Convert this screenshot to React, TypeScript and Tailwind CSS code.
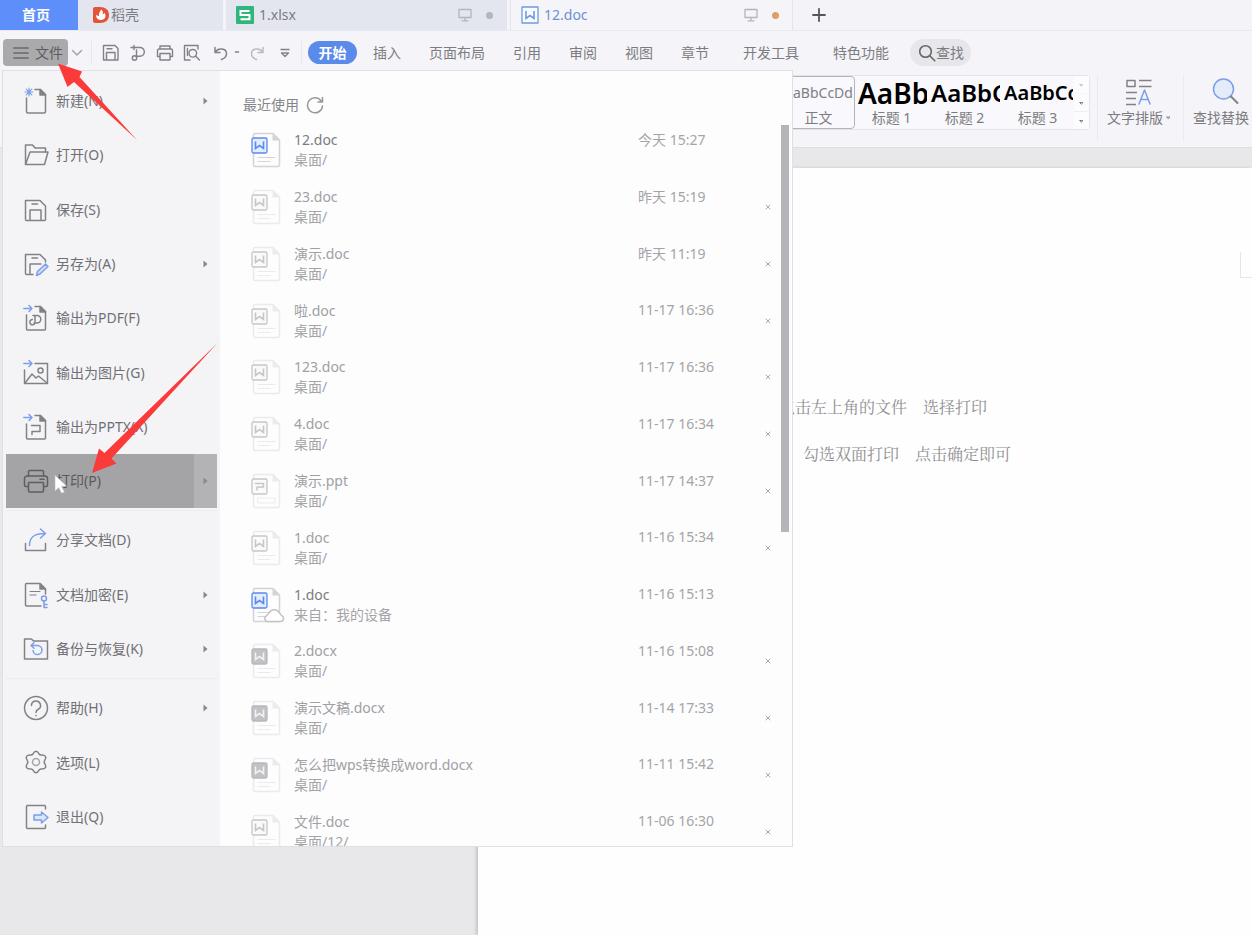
import React from "react";

const INK = "#828286";
const BLUE = "#7c9fe6";

function Svg({ w, h, children, stroke = INK, sw = 1.5 }: { w: number; h: number; children: React.ReactNode; stroke?: string; sw?: number }) {
  return (
    <svg width={w} height={h} viewBox={`0 0 ${w} ${h}`} fill="none" stroke={stroke} strokeWidth={sw} strokeLinejoin="round" strokeLinecap="round" aria-hidden="true" className="shrink-0">
      {children}
    </svg>
  );
}

type MenuItem = { label: string; icon: React.ReactNode; more?: boolean; active?: boolean };

const exportArrow = <path stroke={BLUE} d="M0.8 4.5H9M6 1.5l3 3-3 3" />;

const groups: MenuItem[][] = [
  [
    {
      label: "新建(N)",
      more: true,
      icon: (
        <>
          <path d="M3.5 11V24.5a1.5 1.5 0 0 0 1.5 1.5H21a1.500 1.500 0 0 0 1.500-1.500V7.500L17.500 2.500H12" />
          <path fill={INK} d="M17 2.500v5.500h5.500z" />
          <path stroke={BLUE} strokeWidth="1.200" d="M6 1v8M2 5h8M3.200 2.200l5.600 5.600M8.800 2.200L3.200 7.800" />
        </>
      ),
    },
    {
      label: "打开(O)",
      icon: (
        <>
          <path d="M2.500 23V4h7l2.500 3h10.500v4" />
          <path d="M2.500 23.500L7 11h18l-3.500 12.500z" />
        </>
      ),
    },
    {
      label: "保存(S)",
      icon: (
        <>
          <path d="M2.500 4.500h14.500l5.500 5.500v13.500a1 1 0 0 1-1 1h-18a1 1 0 0 1-1-1z" />
          <path d="M7 24v-10h11v10M9 8h5.500" />
        </>
      ),
    },
    {
      label: "另存为(A)",
      more: true,
      icon: (
        <>
          <path d="M10 24.500H3.500a1 1 0 0 1-1-1v-19H17l5.500 5.500v2" />
          <path d="M7 24v-10h11M9 8h5.500" />
          <path stroke={BLUE} fill="#cfdcf7" d="M13.500 25.500l1-4 8-7.500 2.500 2.500-8 7.500z" />
        </>
      ),
    },
    {
      label: "输出为PDF(F)",
      icon: (
        <>
          {exportArrow}
          <path d="M3.500 11V25a1 1 0 0 0 1 1H21.500a1 1 0 0 0 1-1V7.500L17.500 2.500H12" />
          <path fill={INK} d="M17 2.500v5.500h5.500z" />
          <path d="M10 11.500H14a3.800 3.800 0 0 1 0 7.600h-3M12 11.500v6.500a2.600 2.600 0 1 1-2.600-2.400" />
        </>
      ),
    },
    {
      label: "输出为图片(G)",
      icon: (
        <>
          {exportArrow}
          <path d="M12 4.500h12.500V24.500H1.500V11" />
          <circle cx="17.500" cy="11.500" r="2.500" />
          <path d="M2 24L9 15l4 4 2.500-2L24 24" />
        </>
      ),
    },
    {
      label: "输出为PPTX(X)",
      icon: (
        <>
          {exportArrow}
          <path d="M3.500 11V25a1 1 0 0 0 1 1H21.500a1 1 0 0 0 1-1V7.500L17.500 2.500H12" />
          <path fill={INK} d="M17 2.500v5.500h5.500z" />
          <path d="M8.500 12.500h8.500v6H9v3" />
        </>
      ),
    },
    {
      label: "打印(P)",
      more: true,
      active: true,
      icon: (
        <g stroke="#5e5e61">
          <path d="M5.500 9V4.500a1 1 0 0 1 1-1h13a1 1 0 0 1 1 1V9" />
          <path d="M5 19.500H3a1.500 1.500 0 0 1-1.500-1.500v-6.500A2.500 2.500 0 0 1 4 9h18a2.500 2.500 0 0 1 2.500 2.500V18a1.500 1.500 0 0 1-1.500 1.500h-2" />
          <path d="M5.500 15.500h15v8.500a1 1 0 0 1-1 1h-13a1 1 0 0 1-1-1zM17 12.200h4" />
        </g>
      ),
    },
  ],
  [
    {
      label: "分享文档(D)",
      icon: (
        <>
          <path d="M2.500 17.500v7h20v-7" />
          <path stroke={BLUE} d="M6.500 19.500C6.500 11 11 7.500 21.500 7.500M17.500 3l5 4.500-5 4.500" />
        </>
      ),
    },
    {
      label: "文档加密(E)",
      more: true,
      icon: (
        <>
          <path d="M18 25H3.500a1 1 0 0 1-1-1V3.500a1 1 0 0 1 1-1H17L22.500 8v5" />
          <path fill={INK} d="M17 2.500V8h5.500z" />
          <path d="M7 10.500h10M7 14h6" strokeWidth="1.200" />
          <g stroke={BLUE}>
            <circle cx="21" cy="17.500" r="2.500" />
            <path d="M21 20v6.500M21 23.500h3M21 26.500h3" />
          </g>
        </>
      ),
    },
    {
      label: "备份与恢复(K)",
      more: true,
      icon: (
        <>
          <path d="M1.500 24V4h7l2 2h14V24z" />
          <path stroke={BLUE} d="M8.500 10.500h6a4.500 4.500 0 1 1-4.500 5M11 7.800l-3 2.700 3 2.700" />
        </>
      ),
    },
  ],
  [
    {
      label: "帮助(H)",
      more: true,
      icon: (
        <>
          <circle cx="13" cy="14" r="11.500" />
          <path d="M8.500 11.500a4.500 4.500 0 1 1 6.500 4c-1.500.8-2 1.500-2 3M13 21.500v.200" />
        </>
      ),
    },
    {
      label: "选项(L)",
      icon: (
        <>
          <path d="M13 2.200c1.400 0 2.200 1.200 3 2.700.5.900 1.100 1.200 2.100 1.100 1.800-.1 3.500 0 4.300 1.300.8 1.200.2 2.700-.8 4.300-.6.900-.6 1.900 0 2.800 1 1.600 1.600 3.100.8 4.300-.8 1.300-2.500 1.400-4.300 1.300-1-.1-1.600.2-2.100 1.100-.8 1.500-1.600 2.700-3 2.700s-2.200-1.200-3-2.700c-.5-.9-1.100-1.200-2.100-1.100-1.800.1-3.500 0-4.300-1.300-.8-1.200-.2-2.700.8-4.300.6-.9.6-1.900 0-2.800-1-1.600-1.600-3.100-.8-4.300.8-1.300 2.500-1.400 4.300-1.300 1 .1 1.600-.2 2.100-1.100.8-1.500 1.600-2.700 3-2.700z" />
          <circle cx="13" cy="13" r="3.500" stroke="#a5a5a9" />
        </>
      ),
    },
    {
      label: "退出(Q)",
      icon: (
        <>
          <path d="M22.500 6V3.500a1 1 0 0 0-1-1H4.500a1 1 0 0 0-1 1V24.500a1 1 0 0 0 1 1H21.500a1 1 0 0 0 1-1V22" />
          <path stroke={BLUE} fill="#dbe6fb" d="M11 12h7.500V9l6.500 5.500-6.500 5.500v-3H11z" />
        </>
      ),
    },
  ],
];

type Kind = "doc" | "docx" | "ppt";
type RecentFile = { name: string; path: string; time: string; kind: Kind; live?: boolean; cloud?: boolean };

const files: RecentFile[] = [
  { name: "12.doc", path: "桌面/", time: "今天 15:27", kind: "doc", live: true },
  { name: "23.doc", path: "桌面/", time: "昨天 15:19", kind: "doc" },
  { name: "演示.doc", path: "桌面/", time: "昨天 11:19", kind: "doc" },
  { name: "啦.doc", path: "桌面/", time: "11-17 16:36", kind: "doc" },
  { name: "123.doc", path: "桌面/", time: "11-17 16:36", kind: "doc" },
  { name: "4.doc", path: "桌面/", time: "11-17 16:34", kind: "doc" },
  { name: "演示.ppt", path: "桌面/", time: "11-17 14:37", kind: "ppt" },
  { name: "1.doc", path: "桌面/", time: "11-16 15:34", kind: "doc" },
  { name: "1.doc", path: "来自：我的设备", time: "11-16 15:13", kind: "doc", live: true, cloud: true },
  { name: "2.docx", path: "桌面/", time: "11-16 15:08", kind: "docx" },
  { name: "演示文稿.docx", path: "桌面/", time: "11-14 17:33", kind: "docx" },
  { name: "怎么把wps转换成word.docx", path: "桌面/", time: "11-11 15:42", kind: "docx" },
  { name: "文件.doc", path: "桌面/12/", time: "11-06 16:30", kind: "doc" },
];

function FileIcon({ kind, live, cloud }: { kind: Kind; live?: boolean; cloud?: boolean }) {
  const sheet = live ? "#d4d4d8" : "#ebebee";
  const mark = live ? "#5b8bea" : "#c6c6ca";
  const solid = kind === "docx";
  return (
    <svg width="36" height="38" viewBox="0 0 36 38" fill="none" strokeLinejoin="round" strokeLinecap="round" aria-hidden="true" className="shrink-0">
      <path stroke={sheet} strokeWidth="1.5" d="M5 2.500H23l6.500 6.500V34a1.500 1.500 0 0 1-1.500 1.500H5A1.500 1.500 0 0 1 3.500 34V4A1.500 1.500 0 0 1 5 2.500z" />
      <path fill={sheet} d="M22.500 2.500V9.500H29.500z" />
      {kind === "ppt" ? <rect x="8" y="26" width="17" height="5" stroke={sheet} /> : <path stroke={sheet} d="M8 26.500H25M8 30.500H20" />}
      <rect x="2" y="7" width="15" height="15" rx="1.500" stroke={solid ? "#b8b8bc" : mark} strokeWidth="1.300" fill={solid ? "#c2c2c6" : live ? "#e3edff" : "#fafafa"} />
      {kind === "ppt" ? (
        <path stroke={mark} strokeWidth="1.500" d="M5.500 11.500h8v3.500h-6.500v3" />
      ) : (
        <path stroke={solid ? "#f2f2f4" : mark} strokeWidth="1.600" strokeLinecap="butt" strokeLinejoin="miter" d="M5.500 10.500v7l4-3 4 3v-7" />
      )}
      {cloud && <path fill="#fff" stroke="#c2c2c6" strokeWidth="1.500" d="M17.500 35.500a3 3 0 0 1-1.500-5.400c1.500-1 2.300-2 3.200-3.600a6 6 0 0 1 10 0c.9 1.600 1.700 2.600 3.200 3.600a3 3 0 0 1-1.500 5.400z" />}
    </svg>
  );
}

function WordTabIcon() {
  return (
    <Svg w={18} h={18} stroke="#6f9bdc" sw={1.3}>
      <rect x="1" y="1" width="16" height="16" fill="#f8fbff" />
      <path strokeWidth="1.600" strokeLinejoin="miter" strokeLinecap="butt" d="M5 5v7.500l4-3 4 3V5" />
    </Svg>
  );
}

function Monitor() {
  return (
    <Svg w={14} h={14} stroke="#b4b5bb" sw={1.3}>
      <path d="M1 1.500h12v8H1zM7 9.500v3M4 12.800h6" />
    </Svg>
  );
}

function TabBar() {
  return (
    <header className="flex h-[31px] items-stretch border-b border-[#e8e9ef] bg-[#f3f3f8]">
      <button className="w-[78px] bg-[#5e8efa] pr-1.5 font-bold text-white">首页</button>
      <button className="flex w-[145px] items-center gap-0.5 bg-[#e4e6ef] pl-[15px]">
        <svg width="16" height="18" viewBox="0 0 16 18" aria-hidden="true">
          <path fill="#e2543a" d="M0 3a2 2 0 0 1 2-2h5c5.500 0 9 3 9 8s-3.500 8-9 8H2a2 2 0 0 1-2-2z" />
          <path fill="#fff" d="M8 3.500c2.500 1.500 2 3.500 1.500 5 1-.3 1.500-1 1.800-1.800C14 10 12 14 8 14c-3.500 0-5.500-2.500-4.500-5.500.8 1 1.500 1.500 2.500 1.500C5.500 7.500 7 6 8 3.500z" />
        </svg>
        稻壳
      </button>
      <div className="ml-[3px] flex w-[281px] items-center bg-[#e4e6ef] pl-2.5">
        <svg width="18" height="18" viewBox="0 0 18 18" aria-hidden="true">
          <rect width="18" height="18" rx="1" fill="#2fb67c" />
          <path fill="none" stroke="#fff" strokeWidth="2" d="M13.500 5h-9v4h9v4.200h-9" />
        </svg>
        <a href="#xlsx" className="ml-[5px] flex-1">1.xlsx</a>
        <Monitor />
        <span className="mr-[14px] ml-[14px] size-[7px] rounded-full bg-[#b4b5bb]" />
      </div>
      <div className="ml-[3px] flex w-[283px] items-center border-x border-[#e3e5ec] bg-[#f5f5f9] pl-[10px]">
        <WordTabIcon />
        <a href="#doc" className="ml-[5px] flex-1 text-[#6f90d0]">12.doc</a>
        <Monitor />
        <span className="mr-[13px] ml-[14px] size-[7px] rounded-full bg-[#dc9f64]" />
      </div>
      <button aria-label="新建标签" className="flex w-[52px] items-center justify-center">
        <Svg w={14} h={14} stroke="#55555a" sw={1.8}>
          <path d="M7 1v12M1 7h12" />
        </Svg>
      </button>
    </header>
  );
}

const tools: { label: string; body: React.ReactNode }[] = [
  { label: "保存", body: <path d="M1.500 1.500h11.500l3 3v11.500h-14.500zM4.500 16V8.500h8.500V16M5 4.800h5" /> },
  { label: "输出为PDF", body: <><path d="M2 3.500h9a4.300 4.300 0 0 1 0 8.700H8M5 1.500v4M7.500 6v7" /><circle cx="5.500" cy="14" r="2.200" /></> },
  { label: "打印", body: <path d="M4 5V2h10v3M4 12.500H1.500v-6A1.500 1.500 0 0 1 3 5h12a1.500 1.500 0 0 1 1.500 1.500v6H14M4 9.500h10v6.500H4z" /> },
  { label: "打印预览", body: <><path d="M7 16H1.500V1.500h13.500V5" /><circle cx="9.800" cy="9.300" r="3.800" /><path d="M12.500 12l4 4M4.500 4.500v7" /></> },
];

function QuickAccess() {
  return (
    <div className="flex items-center">
      <button className="flex h-[27px] w-[65px] items-center gap-[6px] rounded bg-[#aaaaad] pl-2.5 text-[#5c5c60]">
        <Svg w={16} h={14} stroke="#6a6a6e">
          <path d="M0.800 2h14.400M0.800 7h14.400M0.800 12h14.400" />
        </Svg>
        文件
      </button>
      <button aria-label="文件选项" className="flex w-[18px] justify-center">
        <Svg w={12} h={8} stroke="#a5a5a9"><path d="M1.500 1.500L6 6l4.500-4.500" /></Svg>
      </button>
      <span className="mx-[5px] h-6 w-px bg-[#e8e8ec]" />
      <div className="ml-[5px] flex gap-[9px]">
        {tools.map((t) => (
          <button key={t.label} aria-label={t.label}>
            <Svg w={18} h={18} sw={1.4}>{t.body}</Svg>
          </button>
        ))}
      </div>
      <button aria-label="撤销" className="ml-3">
        <Svg w={16} h={16}><path d="M2 2.500V7.500h5M2.300 7C5 2.500 13.500 3 13.500 8.500c0 3-2 5-5 6" /></Svg>
      </button>
      <button aria-label="撤销列表" className="flex w-4 items-center justify-center">
        <Svg w={6} h={3}><path d="M1.500 1h3" /></Svg>
      </button>
      <button aria-label="恢复" className="ml-1">
        <Svg w={16} h={16} stroke="#bcbcc0"><path d="M14 2.500V7.500H9M13.700 7C11 2.500 2.500 3 2.500 8.500c0 3 2 5 5 6" /></Svg>
      </button>
      <button aria-label="自定义工具栏" className="ml-[15px]">
        <Svg w={10} h={10} sw={1.3}><path d="M1 1.500h8M1.500 5L5 8.500 8.500 5z" /></Svg>
      </button>
      <span className="mr-[6px] ml-[11px] h-6 w-px bg-[#e8e8ec]" />
    </div>
  );
}

function Toolbar() {
  return (
    <div className="flex h-[39px] items-center bg-[#f5f4f8] pt-1 pl-[3px]">
      <QuickAccess />
      <nav className="flex items-center gap-7 whitespace-nowrap">
        <button className="-mr-3 h-[23px] w-[49px] rounded-full bg-[#5b8bea] font-bold text-white">开始</button>
        {["插入", "页面布局", "引用", "审阅", "视图", "章节"].map((t) => (
          <button key={t}>{t}</button>
        ))}
      </nav>
      <nav className="ml-[34px] flex items-center gap-[34px] whitespace-nowrap">
        <button>开发工具</button>
        <button>特色功能</button>
      </nav>
      <button className="ml-[21px] flex h-[27px] w-[61px] shrink-0 items-center rounded-full bg-[#e7e6eb] pl-2">
        <Svg w={18} h={18} stroke="#66666a" sw={1.6}><circle cx="7.500" cy="7.500" r="5.800" /><path d="M12 12l4.800 4.800" /></Svg>
        查找
      </button>
    </div>
  );
}

function StyleCell({ sample, name, sampleClass, boxClass = "border-transparent" }: { sample: string; name: string; sampleClass: string; boxClass?: string }) {
  return (
    <button className={`flex w-[73px] flex-col items-center rounded-sm border ${boxClass}`}>
      <span className={`flex h-8 w-full items-center overflow-hidden whitespace-nowrap ${sampleClass}`}>{sample}</span>
      <span className="leading-[18px]">{name}</span>
    </button>
  );
}

function Ribbon() {
  return (
    <section className="flex h-[78px] items-start overflow-hidden border-b border-[#dedde1] bg-[#f5f4f8] pt-[5px] pl-[781px]">
      <div className="flex h-[55px] shrink-0 rounded border border-[#e4e3e8] bg-[#f9f8fc]">
        <StyleCell sample="AaBbCcDd" name="正文" sampleClass="justify-center text-sm text-[#808084]" boxClass="border-[#b4b4b8]" />
        <StyleCell sample="AaBb" name="标题 1" sampleClass="pl-[2px] text-[28px] font-semibold text-black" />
        <StyleCell sample="AaBbC" name="标题 2" sampleClass="pl-[2px] text-2xl font-semibold text-black" />
        <StyleCell sample="AaBbCc" name="标题 3" sampleClass="pl-[2px] text-xl font-semibold text-black" />
        <div className="flex w-[15px] flex-col divide-y divide-[#eeedf2] bg-[#fcfcfe]">
          {["上一行", "下一行", "更多样式"].map((l) => (
            <button key={l} aria-label={l} className="flex flex-1 items-center justify-center first:opacity-40">
              <Svg w={5} h={4} sw={1}><path d="M1 1.500h3L2.500 3z" /></Svg>
            </button>
          ))}
        </div>
      </div>
      <span className="ml-[7px] h-[66px] w-px shrink-0 bg-[#ebeaef]" />
      <button className="ml-[9px] flex shrink-0 flex-col items-center gap-px whitespace-nowrap">
        <Svg w={28} h={32}>
          <path strokeLinecap="butt" d="M2 5.500h8v6H2zM14 5.500h12.500M14 11.500h12.500M1 17.500h11M1 23.500h10M1 29.500h10" />
          <path stroke={BLUE} d="M14 29l5.500-14L25 29M16 24.500h7" />
        </Svg>
        <span className="flex items-center gap-[3px]">文字排版<Svg w={5} h={4} sw={1}><path d="M1 1h3L2.500 2.500z" /></Svg></span>
      </button>
      <span className="ml-[12px] h-[66px] w-px shrink-0 bg-[#ebeaef]" />
      <button className="ml-[9px] flex shrink-0 flex-col items-center gap-px whitespace-nowrap">
        <Svg w={28} h={32}>
          <circle cx="12.500" cy="14" r="10" fill="#e4ecfb" stroke={BLUE} />
          <path d="M20 21.500l6.500 6.500" strokeWidth="2" />
        </Svg>
        <span className="flex items-center gap-[3px]">查找替换<Svg w={5} h={4} sw={1}><path d="M1 1h3L2.500 2.500z" /></Svg></span>
      </button>
    </section>
  );
}

function FileMenu() {
  return (
    <div className="absolute top-[70px] left-[2px] flex h-[777px] w-[791px] border border-[#e0e0e4] bg-[#fdfdfe]">
      <nav className="flex w-[217px] flex-col bg-[#f4f4f7] px-[3px] pt-[3px] pb-[2px] text-[#707074]">
        {groups.map((items, g) => (
          <React.Fragment key={g}>
            {g > 0 && <div className="h-[5px] pt-[2px]"><hr className="border-[#ececf0]" /></div>}
            {items.map((it) => (
              <button key={it.label} className={`flex flex-1 items-center gap-[7px] pl-[17px] text-left ${it.active ? "bg-[#a4a4a7] text-[#5a5a5d]" : ""}`}>
                <Svg w={26} h={28}>{it.icon}</Svg>
                <span className="flex-1">{it.label}</span>
                {it.more && (
                  <span className={`flex w-[23px] items-center justify-center self-stretch ${it.active ? "bg-[#b3b3b6]" : ""}`}>
                    <svg width="5" height="8" viewBox="0 0 5 8" aria-hidden="true"><path fill="#88888c" d="M0.500 0.500L4.500 4 0.500 7.500z" /></svg>
                  </span>
                )}
              </button>
            ))}
          </React.Fragment>
        ))}
      </nav>
      <section className="flex min-w-0 flex-1 flex-col overflow-hidden">
        <div className="flex h-[51px] shrink-0 items-center gap-[7px] pt-4 pl-[23px] text-[#858589]">
          <h2>最近使用</h2>
          <button aria-label="刷新">
            <Svg w={18} h={18} stroke="#98989c">
              <path d="M15.500 5.500A7.500 7.500 0 1 0 16.500 10M16.500 1.500v4.500H12" />
            </Svg>
          </button>
        </div>
        <div className="flex min-h-0 flex-1">
          <ul className="flex h-[738px] flex-1 flex-col">
            {files.map((f, i) => (
              <li key={i} className="flex flex-1 items-center pl-[30px]">
                <FileIcon kind={f.kind} live={f.live} cloud={f.cloud} />
                <div className="ml-2 flex-1 leading-5 text-[#a4a4a8]">
                  <p className={f.live ? "text-[#7c7c80]" : "text-[#a0a0a4]"}>{f.name}</p>
                  <p>{f.path}</p>
                </div>
                <time className="w-[118px] self-stretch pt-2 leading-5 text-[#a4a4a8]">{f.time}</time>
                <span className="flex w-6 justify-center">
                  {!f.live && (
                    <button aria-label={`移除 ${f.name}`}>
                      <Svg w={6} h={6} stroke="#a8a8ac" sw={1}><path d="M1 1l4 4M5 1L1 5" /></Svg>
                    </button>
                  )}
                </span>
              </li>
            ))}
          </ul>
          <div className="w-3 pt-[3px]">
            <div className="ml-px h-[407px] w-2 bg-[#b5b5b9]" />
          </div>
        </div>
      </section>
    </div>
  );
}

function Annotations() {
  return (
    <svg width="240" height="510" viewBox="0 0 240 510" aria-hidden="true" className="pointer-events-none absolute top-0 left-0">
      <path fill="#fff" stroke="#b9b9bc" strokeWidth="0.600" d="M55 475l11.500 11-5 .5 3 5.500-3 1.300-2.700-5.600-3.800 3.300z" />
      <path fill="#fb3b39" d="M58 63.500L82 71.500 79.500 77 137 140 74 82 67.500 87z" />
      <path fill="#fb3b39" d="M92 473L99 448.500 104.500 453 217.500 343 111.500 458.500 116.500 463.500z" />
    </svg>
  );
}

export default function App() {
  return (
    <div className="relative flex min-h-screen flex-col overflow-hidden bg-[#e8e7ea] font-['Noto_Sans','Noto_Sans_CJK_SC',sans-serif] text-sm text-[#7c7c80]">
      <TabBar />
      <Toolbar />
      <Ribbon />
      <main className="flex flex-1 pt-5 pl-[478px]">
        <article className="flex flex-1 flex-col bg-[#fefefe] pt-[84px] font-['Noto_Serif_CJK_SC','Noto_Sans_CJK_SC',serif] text-base shadow-[-2px_0_3px_#c4c4c8]">
          <span className="h-[26px] w-3 self-end border-b border-l border-[#e6e6ea]" />
          <div className="mt-[105px] pl-[301px] leading-[47px] whitespace-nowrap text-[#8f8f92]">
            <p>点击左上角的文件　选择打印</p>
            <p className="pl-6">勾选双面打印　点击确定即可</p>
          </div>
        </article>
      </main>
      <FileMenu />
      <Annotations />
    </div>
  );
}
